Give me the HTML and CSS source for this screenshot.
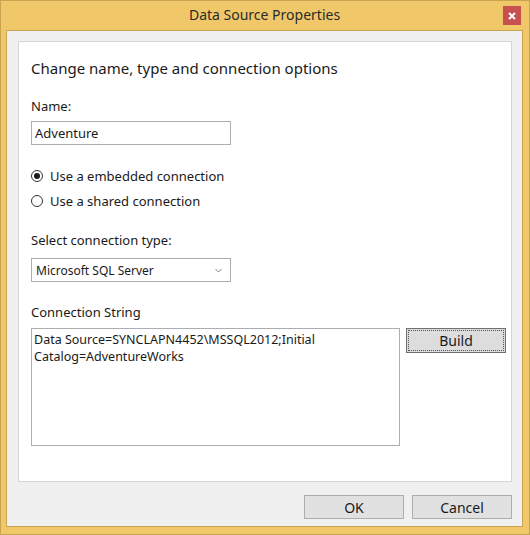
FILE: index.html
```html
<!DOCTYPE html>
<html>
<head>
<meta charset="utf-8">
<link rel="stylesheet" href="styles.css">
</head>
<body>
<div class="window">
  <div class="titlebar">
    <div class="title">Data Source Properties</div>
    <div class="close"><svg width="8" height="8" viewBox="0 0 8 8"><path d="M1 1L7 7M7 1L1 7" stroke="#fff" stroke-width="2"/></svg></div>
  </div>
  <div class="client">
    <div class="panel">
      <div class="heading">Change name, type and connection options</div>
      <div class="label label-name">Name:</div>
      <div class="textbox">Adventure</div>
      <div class="radios">
        <div class="radio-row"><span class="radio checked"></span><span>Use a embedded connection</span></div>
        <div class="radio-row"><span class="radio"></span><span>Use a shared connection</span></div>
      </div>
      <div class="label label-type">Select connection type:</div>
      <div class="select"><span>Microsoft SQL Server</span><svg width="7" height="5" viewBox="0 0 7 5"><path d="M0.5 1L3.5 4L6.5 1" fill="none" stroke="#808080" stroke-width="1"/></svg></div>
      <div class="label label-conn">Connection String</div>
      <div class="conn-row">
        <div class="textarea">Data Source=SYNCLAPN4452\MSSQL2012;Initial<br>Catalog=AdventureWorks</div>
        <div class="btn build"><span class="focus">Build</span></div>
      </div>
    </div>
    <div class="footer">
      <div class="btn">OK</div>
      <div class="btn">Cancel</div>
    </div>
  </div>
</div>
</body>
</html>
```
FILE: styles.css
```css
html, body {
  margin: 0;
  padding: 0;
}
body {
  width: 530px;
  height: 535px;
  font-family: "Noto Sans", "Open Sans", sans-serif;
  font-size: 13px;
  color: #1a1a1a;
}
.window {
  box-sizing: border-box;
  width: 530px;
  height: 535px;
  background: #f0c86a;
  border: 1px solid #c9a450;
  display: flex;
  flex-direction: column;
  padding: 0 6px 7px 5px;
}
.titlebar {
  height: 29px;
  position: relative;
  display: flex;
  align-items: center;
  justify-content: center;
}
.title {
  font-size: 14px;
  color: #2b2b2b;
  margin-top: -2px;
}
.close {
  position: absolute;
  right: 2px;
  top: 5px;
  width: 18px;
  height: 19px;
  background: #c75050;
  display: flex;
  align-items: center;
  justify-content: center;
}
.client {
  flex: 1;
  background: #f0f0f0;
  border: 1px solid #c9a450;
  display: flex;
  flex-direction: column;
  padding: 10px 10px 7px 11px;
}
.panel {
  background: #fff;
  border: 1px solid #d5d5d5;
  height: 441px;
  box-sizing: border-box;
  padding: 0 0 0 12px;
  display: flex;
  flex-direction: column;
  align-items: flex-start;
}
.heading {
  font-size: 15px;
  margin-top: 15px;
  line-height: 22px;
  color: #1a1a1a;
}
.label {
  line-height: 18px;
}
.label-name { margin-top: 18px; }
.textbox {
  margin-top: 6px;
  box-sizing: border-box;
  width: 200px;
  height: 24px;
  border: 1px solid #abadb3;
  padding: 0 3px;
  line-height: 22px;
}
.radios {
  margin-top: 22px;
  display: flex;
  flex-direction: column;
  gap: 7px;
}
.radio-row {
  display: flex;
  align-items: center;
  gap: 7px;
  line-height: 18px;
}
.radio {
  box-sizing: border-box;
  width: 12px;
  height: 12px;
  border-radius: 50%;
  border: 1px solid #333;
  display: flex;
  align-items: center;
  justify-content: center;
}
.radio.checked::after {
  content: "";
  width: 6px;
  height: 6px;
  border-radius: 50%;
  background: #1a1a1a;
}
.label-type { margin-top: 21px; }
.select {
  margin-top: 9px;
  box-sizing: border-box;
  width: 200px;
  height: 24px;
  border: 1px solid #acacac;
  padding: 0 8px 0 4px;
  display: flex;
  align-items: center;
  justify-content: space-between;
  font-size: 12px;
}
.label-conn { margin-top: 21px; }
.conn-row {
  margin-top: 7px;
  display: flex;
  gap: 6px;
  align-items: flex-start;
}
.textarea {
  box-sizing: border-box;
  width: 369px;
  height: 118px;
  border: 1px solid #abadb3;
  padding: 2px 2px;
  line-height: 17px;
  font-size: 12.5px;
}
.btn {
  box-sizing: border-box;
  width: 100px;
  height: 24px;
  background: #e1e1e1;
  border: 1px solid #adadad;
  display: flex;
  align-items: center;
  justify-content: center;
  font-size: 14px;
}
.build {
  height: 25px;
  border: 1px solid #707070;
  background: #dddddd;
  padding: 1px;
}
.build .focus {
  width: 100%;
  height: 100%;
  box-sizing: border-box;
  border: 1px dotted #555;
  display: flex;
  align-items: center;
  justify-content: center;
}
.footer {
  margin-top: auto;
  display: flex;
  justify-content: flex-end;
  gap: 8px;
}
```
